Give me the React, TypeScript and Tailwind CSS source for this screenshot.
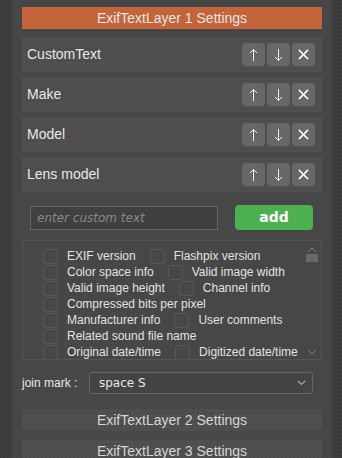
import React from 'react';

const fields = ['CustomText', 'Make', 'Model', 'Lens model'];

const exifRows: string[][] = [
  ['EXIF version', 'Flashpix version'],
  ['Color space info', 'Valid image width'],
  ['Valid image height', 'Channel info'],
  ['Compressed bits per pixel'],
  ['Manufacturer info', 'User comments'],
  ['Related sound file name'],
  ['Original date/time', 'Digitized date/time'],
];

const dots = "bg-[radial-gradient(#ffffff07_1px,transparent_1px)] bg-[size:4px_4px]";

const IconBtn: React.FC<{ children: React.ReactNode }> = ({ children }) => (
  <button className="w-[23px] h-[23px] rounded-[4px] bg-[#676767] flex items-center justify-center text-[#f2f2f2] text-[16px] leading-none font-['DejaVu_Sans',sans-serif] font-extralight">
    {children}
  </button>
);

const App: React.FC = () => {
  return (
    <div className={`w-[342px] h-[458px] overflow-hidden bg-[#3c3c3c] ${dots} flex pl-[12px] pr-[10px] font-['Liberation_Sans',sans-serif]`}>
      <div className="flex-1 bg-[#474747] px-[10px] pt-[7px]">
        <div className="h-[22px] bg-[#c3643a] text-[#e4e4e4] text-[14px] flex items-center justify-center">
          ExifTextLayer 1 Settings
        </div>

        <div className="mt-[8px] flex flex-col gap-[5px]">
          {fields.map((f) => (
            <div key={f} className={`h-[35px] bg-[#4d4d4d] ${dots} flex items-center pl-[5px] pr-[7px]`}>
              <span className="flex-1 text-[14px] text-[#e8e8e8]">{f}</span>
              <div className="flex gap-[2px]">
                <IconBtn>
                  <svg width="9" height="14" viewBox="0 0 9 14" fill="none" stroke="#f2f2f2" strokeWidth="1">
                    <path d="M4.5 1.5 V13 M1 5 L4.5 1.5 L8 5" />
                  </svg>
                </IconBtn>
                <IconBtn>
                  <svg width="9" height="14" viewBox="0 0 9 14" fill="none" stroke="#f2f2f2" strokeWidth="1">
                    <path d="M4.5 1 V12.5 M1 9 L4.5 12.5 L8 9" />
                  </svg>
                </IconBtn>
                <IconBtn>
                  <svg width="11" height="11" viewBox="0 0 11 11" stroke="#fff" strokeWidth="1.6" strokeLinecap="square">
                    <path d="M1.5 1.5 L9.5 9.5 M9.5 1.5 L1.5 9.5" />
                  </svg>
                </IconBtn>
              </div>
            </div>
          ))}
        </div>

        <div className="mt-[13px] flex items-center pl-[8px] pr-[9px]">
          <input
            placeholder="enter custom text"
            className="w-[188px] h-[24px] bg-[#404040] border border-[#666] px-[6px] text-[12px] italic text-[#ddd] placeholder:text-[#8a8a8a] outline-none font-['DejaVu_Sans',sans-serif]"
          />
          <button className="ml-auto w-[78px] h-[25px] rounded-[4px] bg-[#4caf50] text-white font-bold text-[14px] font-['DejaVu_Sans',sans-serif]">
            add
          </button>
        </div>

        <div className="mt-[10px] h-[120px] border border-[#555] flex overflow-hidden">
          <div className="flex-1 pl-[20px] pt-[7px] flex flex-col">
            {exifRows.map((row, i) => (
              <div key={i} className="h-[16px] flex items-center">
                {row.map((label, j) => (
                  <label key={label} className={`flex items-center ${j > 0 ? 'ml-[14px]' : ''}`}>
                    <span className="w-[15px] h-[15px] rounded-[3px] border border-[#5a5a5a] bg-[#474747]" />
                    <span className="ml-[9px] text-[12px] text-[#e2e2e2] whitespace-nowrap">{label}</span>
                  </label>
                ))}
              </div>
            ))}
          </div>
          <div className="w-[16px] flex flex-col items-center pt-[6px] pb-[4px] mr-[1px]">
            <svg width="8" height="5" viewBox="0 0 8 5" fill="none" stroke="#888" strokeWidth="1">
              <path d="M0.5 4.5 L4 1 L7.5 4.5" />
            </svg>
            <div className="mt-[2px] w-[12px] h-[8px] bg-[#6a6a6a]" />
            <div className="flex-1" />
            <svg width="8" height="5" viewBox="0 0 8 5" fill="none" stroke="#888" strokeWidth="1">
              <path d="M0.5 0.5 L4 4 L7.5 0.5" />
            </svg>
          </div>
        </div>

        <div className="mt-[12px] flex items-center pr-[9px]">
          <span className="w-[67px] text-[12px] text-[#e8e8e8]">join mark :</span>
          <div className="flex-1 h-[22px] rounded-[3px] border border-[#666] bg-[#444] flex items-center pl-[9px] pr-[6px]">
            <span className="flex-1 text-[12px] text-[#e8e8e8] font-['DejaVu_Sans',sans-serif]">space S</span>
            <svg width="9" height="6" viewBox="0 0 9 6" fill="none" stroke="#aaa" strokeWidth="1.2">
              <path d="M1 1 L4.5 4.5 L8 1" />
            </svg>
          </div>
        </div>

        <div className={`mt-[15px] h-[22px] bg-[#4d4d4d] ${dots} text-[#d6d6d6] text-[14px] flex items-center justify-center`}>
          ExifTextLayer 2 Settings
        </div>
        <div className={`mt-[9px] h-[22px] bg-[#4d4d4d] ${dots} text-[#d6d6d6] text-[14px] flex items-center justify-center`}>
          ExifTextLayer 3 Settings
        </div>
      </div>
    </div>
  );
};

export default App;
